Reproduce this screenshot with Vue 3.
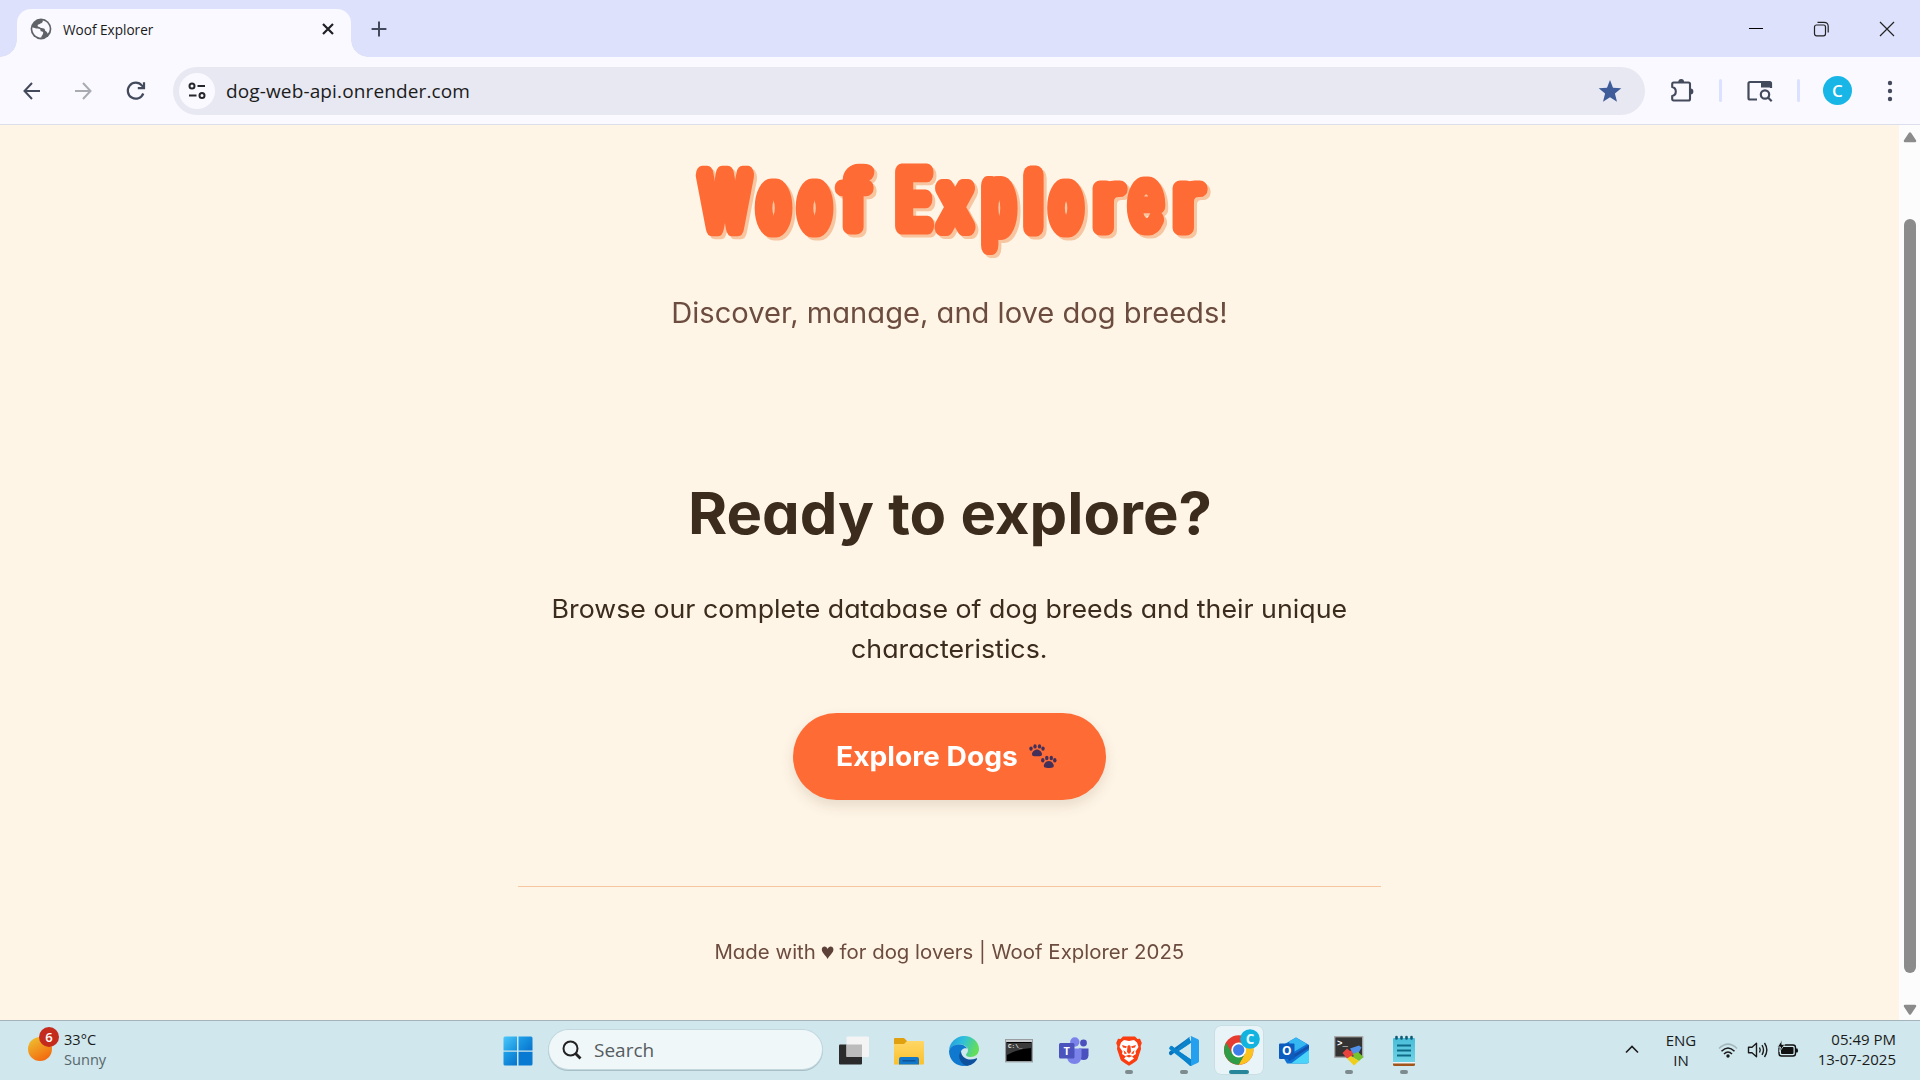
<script setup>
const apps = [
  { name: 'taskview' },
  { name: 'folder' },
  { name: 'edge' },
  { name: 'cmd' },
  { name: 'teams' },
  { name: 'brave', open: true },
  { name: 'vscode', open: true },
  { name: 'chrome', active: true },
  { name: 'outlook' },
  { name: 'putty', open: true },
  { name: 'notepad', open: true }
]

// Bubble title glyphs: centre x, baseline y, horizontal and vertical scale, stroke
const glyphs = [
  { c: 'W', x: 45, y: 91.5, sx: 0.68, sy: 1, w: 18.5 },
  { c: 'o', x: 93.5, y: 91.5, sx: 0.66, sy: 1, w: 19 },
  { c: 'o', x: 134.5, y: 91.5, sx: 0.66, sy: 1, w: 19 },
  { c: 'f ', x: 175, y: 92, sx: 1.05, sy: 1.04, w: 14.5 },
  { c: 'E', x: 233.5, y: 91, sx: 0.78, sy: 1.04, w: 16.5 },
  { c: 'x', x: 275, y: 91.5, sx: 0.75, sy: 1, w: 18 },
  { c: 'p', x: 318.5, y: 94, sx: 0.68, sy: 1.1, w: 18 },
  { c: 'l', x: 353.5, y: 91.5, sx: 0.8, sy: 1, w: 19 },
  { c: 'o', x: 386, y: 91.5, sx: 0.66, sy: 1, w: 19 },
  { c: 'r', x: 427.5, y: 92.5, sx: 1.08, sy: 1.03, w: 14.5 },
  { c: 'e', x: 466, y: 92, sx: 0.76, sy: 1.1, w: 13.5 },
  { c: 'r', x: 507.5, y: 92.5, sx: 1.08, sy: 1.03, w: 14.5 }
]
</script>

<template>
  <div class="screen">
    <header class="tabstrip">
      <div class="tab">
        <svg class="globe" width="22" height="22" viewBox="0 0 22 22"><circle cx="11" cy="11" r="10.4" fill="#5f6368" /><path d="M2.300 9.500C3.500 9 5 10.500 7.500 10.500C10 10.500 10.800 11.500 10.600 13.200C12.500 13 13.800 14 13 15.800C12.300 17.600 11.300 18 11.300 19.600C6 19.600 2 15.500 2.300 9.500Z M12.800 2.500C16.500 3.300 19.500 6.500 19.700 10.500C19.700 12.500 19 14.300 17.800 15.800C17.300 14.800 16.800 13.500 15.500 13C14.500 12.200 15.300 10.800 14 10.400C12.500 10 10.500 10.200 9.500 9C8.300 9 7 8.300 7.800 7C8.300 6 10 6.500 10.300 5.500C12 5.200 12.900 4.300 12.800 2.500Z" fill="#faf9ff" /></svg>
        <span class="tab-title">Woof Explorer</span>
        <svg class="tab-x" width="12" height="12" viewBox="0 0 12 12"><path d="M1 1L11 11M11 1L1 11" stroke="#1f2024" stroke-width="2.200" /></svg>
      </div>
      <svg class="plus" width="16" height="16" viewBox="0 0 16 16"><path d="M8 .6V15.400M.6 8H15.400" stroke="#434a5c" stroke-width="2" /></svg>
      <div class="win">
        <svg width="14" height="16" viewBox="0 0 14 16"><path d="M0 7.500H14" stroke="#000" stroke-width="1" /></svg>
        <svg width="16" height="16" viewBox="0 0 16 16" fill="none" stroke="#222" stroke-width="1.200"><rect x="1.500" y="4" width="11" height="10.800" rx="2" /><path d="M4.500 1.300H11Q15.200 1.300 15.200 5.500V11.500" /></svg>
        <svg width="16" height="16" viewBox="0 0 16 16"><path d="M1 1L15 15M15 1L1 15" stroke="#222" stroke-width="1.200" /></svg>
      </div>
    </header>

    <nav class="toolbar">
      <svg class="back" width="20" height="20" viewBox="0 0 20 20" fill="none" stroke="#434a5c" stroke-width="2"><path d="M10 2L2.500 10L10 18M2.500 10H18" /></svg>
      <svg class="fwd" width="20" height="20" viewBox="0 0 20 20" fill="none" stroke="#a9abb3" stroke-width="2"><path d="M10 2L17.500 10L10 18M17.500 10H2" /></svg>
      <svg class="reload" width="20" height="20" viewBox="0 0 20 20" fill="none" stroke="#434a5c" stroke-width="2.200"><path d="M17.300 12.500A8 8 0 1 1 16 4.600L17.600 6.500" /><path d="M18 1.200V7.200H11.800" /></svg>
      <div class="omnibox">
        <span class="site"><svg width="18" height="18" viewBox="0 0 18 18" fill="none" stroke="#25262b" stroke-width="2"><circle cx="4" cy="4" r="2.500" /><path d="M9.500 4H17M1 13.500H8.500" /><circle cx="14" cy="13.500" r="2.500" /></svg></span>
        <span class="url">dog-web-api.onrender.com</span>
        <svg class="star" width="24" height="22" viewBox="0 0 24 22"><path d="M12 0L15 7.800L23.300 8.300L16.900 13.600L19 21.800L12 17.200L5 21.800L7.100 13.600L.7 8.300L9 7.800Z" fill="#3f5c9a" /></svg>
      </div>
      <svg class="ext" width="24" height="24" viewBox="0 0 24 24"><path d="M3.600 3.500H18.500Q20 3.500 20 5V20Q20 21.500 18.500 21.500H3.600Q2.200 21.500 2.200 20V17C7 16 7 9 2.200 8V5Q2.200 3.500 3.600 3.500Z" fill="none" stroke="#434a5c" stroke-width="2.100" stroke-linejoin="round" /><path d="M8.300 3A2.900 2.900 0 0 1 14.100 3ZM20.500 9.600A2.900 2.900 0 0 1 20.500 15.400Z" fill="#434a5c" /></svg>
      <i class="sep"></i>
      <svg class="lens" width="26" height="22" viewBox="0 0 26 22" fill="none" stroke="#434a5c" stroke-width="2.200"><path d="M10 19.500H3Q1.500 19.500 1.500 18V3.500Q1.500 2 3 2H22.500Q24 2 24 3.500V8" /><path d="M14 1.500H23Q24.500 1.500 24.500 3V7.600H14Z" fill="#434a5c" stroke="none" /><circle cx="18" cy="14.500" r="4.200" /><path d="M21 17.500L24.700 21.200" /></svg>
      <i class="sep sep2"></i>
      <span class="avatar">C</span>
      <svg class="dots" width="6" height="22" viewBox="0 0 6 22" fill="#434a5c"><circle cx="3" cy="3" r="2.200" /><circle cx="3" cy="11" r="2.200" /><circle cx="3" cy="19" r="2.200" /></svg>
    </nav>

    <div class="viewport">
      <main class="page">
        <h1 class="title">
          <svg width="540" height="130" viewBox="0 0 540 130">
            <defs><filter id="fatten" x="0" y="0" width="540" height="130" filterUnits="userSpaceOnUse" color-interpolation-filters="sRGB"><feMorphology operator="dilate" radius="2 0" /></filter></defs>
            <g class="bubble" filter="url(#fatten)">
              <text v-for="(g, i) in glyphs" :key="i" :transform="`translate(${g.x} ${g.y}) scale(${g.sx} ${g.sy})`" :stroke-width="g.w" text-anchor="middle">{{ g.c }}</text>
            </g>
          </svg>
        </h1>
        <p class="sub">Discover, manage, and love dog breeds!</p>
        <section class="cta">
          <h2>Ready to explore?</h2>
          <p class="lead">Browse our complete database of dog breeds and their unique<br>characteristics.</p>
          <a class="btn"><span class="btn-text">Explore Dogs</span>
            <svg width="28" height="26" viewBox="0 0 28 26" fill="#43305a"><g id="paw"><path d="M8 5.500C10.500 5.500 13 8 13 10.200C13 12.500 10.500 12.300 8 12.300S3 12.500 3 10.200C3 8 5.500 5.500 8 5.500Z" /><ellipse cx="2" cy="4.600" rx="1.700" ry="2.200" /><ellipse cx="6" cy="2.400" rx="1.700" ry="2.200" /><ellipse cx="10.500" cy="2.400" rx="1.700" ry="2.200" /><ellipse cx="14" cy="4.600" rx="1.700" ry="2.200" /></g><use href="#paw" x="11.800" y="11.600" /></svg>
          </a>
        </section>
        <footer class="foot"><span>Made with <svg width="12" height="13" viewBox="0 0 12 13"><path d="M6 13C4.500 9.500 .3 7 .3 3.500C.3 -.3 5 -.6 6 3C7 -.6 11.700 -.3 11.700 3.500C11.700 7 7.500 9.500 6 13Z" fill="#5d4037" /></svg> for dog lovers | Woof Explorer 2025</span></footer>
      </main>
      <aside class="scroll">
        <svg width="14" height="11" viewBox="0 0 14 11"><path d="M7 1.500L12 9H2Z" fill="#8b8b8b" stroke="#8b8b8b" stroke-width="2.500" stroke-linejoin="round" /></svg>
        <i class="thumb"></i>
        <svg width="14" height="11" viewBox="0 0 14 11"><path d="M7 9.500L12 2H2Z" fill="#8b8b8b" stroke="#8b8b8b" stroke-width="2.500" stroke-linejoin="round" /></svg>
      </aside>
    </div>

    <footer class="taskbar">
      <div class="weather">
        <span class="sun"><b>6</b></span>
        <div class="wt"><span>33°C</span><span class="dim">Sunny</span></div>
      </div>
      <div class="start">
        <svg width="30" height="30" viewBox="0 0 30 30"><defs><linearGradient id="wg" x1="0" y1="0" x2="1" y2="1"><stop offset="0" stop-color="#4cc8fb" /><stop offset="1" stop-color="#1390dd" /></linearGradient><linearGradient id="wg2" x1="0" y1="0" x2="1" y2="1"><stop offset="0" stop-color="#1fa3ea" /><stop offset="1" stop-color="#0873cc" /></linearGradient></defs><path d="M2 .5H14V14.500H.5V2Q.5 .5 2 .5Z" fill="url(#wg)" /><path d="M15.500 .5H28Q29.500 .5 29.500 2V14.500H15.500Z" fill="url(#wg2)" /><path d="M.5 15.800H14V29.500H2Q.5 29.500 .5 28Z" fill="url(#wg2)" /><path d="M15.500 15.800H29.500V28Q29.500 29.500 28 29.500H15.500Z" fill="#087ad2" /></svg>
      </div>
      <div class="search">
        <svg width="20" height="20" viewBox="0 0 20 20" fill="none" stroke="#222"><circle cx="8.500" cy="8.500" r="7" stroke-width="2" /><path d="M13.500 13.500L18.500 18.500" stroke-width="2.800" /></svg>
        <span>Search</span>
      </div>
      <div class="apps">
        <div v-for="a in apps" :key="a.name" class="cell" :class="{ active: a.active, open: a.open }">
          <svg v-if="a.name === 'taskview'" width="30" height="30" viewBox="0 0 30 30"><rect x="0" y="8.500" width="23" height="20" rx="1" fill="#2b2b2b" /><rect x="7.500" y=".5" width="22.500" height="20.500" rx="1" fill="#f4f4f4" /><rect x="7.500" y="8.500" width="15.500" height="12.500" fill="#bcbcbc" /></svg>
          <svg v-else-if="a.name === 'folder'" width="30" height="30" viewBox="0 0 30 30"><defs><linearGradient id="fg" x1="0" y1="0" x2="0" y2="1"><stop offset="0" stop-color="#ffd766" /><stop offset="1" stop-color="#fbc02d" /></linearGradient></defs><path d="M0 3Q0 2 1 2H10L13 5V9H0Z" fill="#e0a010" /><path d="M0 8H10L13 5H29Q30 5 30 6V27Q30 28.500 29 28.500H0Z" fill="url(#fg)" /><path d="M5 28.500V23Q5 21 7 21H23Q25 21 25 23V28.500Z" fill="#1277c8" /><path d="M8.500 24.800H21.500" stroke="#0b4c8e" stroke-width="1.200" /></svg>
          <svg v-else-if="a.name === 'edge'" width="30" height="30" viewBox="0 0 30 30"><defs><linearGradient id="eg" x1="0" y1="0" x2="1" y2=".3"><stop offset="0" stop-color="#2196e0" /><stop offset=".5" stop-color="#2fc0dc" /><stop offset="1" stop-color="#63dd5b" /></linearGradient></defs><path d="M0 15C0 7 7 0 15 0C24 0 30 6.500 30 13C30 18 26 21 21.500 21C18 21 17 20 17 18.800C17 17.500 19 17 19 14.500C19 11 15.500 8.500 11 8.500C5 8.500 0 12 0 15Z" fill="url(#eg)" /><path d="M0 15C1 10.500 6 8.500 10.500 8.500C13.500 8.500 17 10 18 12.500C14 11.500 11.500 14.500 11.500 18C11.500 23 15 27.500 22 28C18 30.500 10 31 5 26.500Q0 22 0 15Z" fill="#0f79d0" /><path d="M12 15C8 20 11 27 17 29.800C22 29.500 26 27 28 23.200C28.300 22.500 27.700 22 27 22.400C20 25.500 12 22 12 15Z" fill="#0d519e" /></svg>
          <svg v-else-if="a.name === 'cmd'" width="28" height="24" viewBox="0 0 28 24"><rect x=".7" y=".7" width="26.600" height="22" fill="#000" stroke="#9a9ea0" stroke-width="1.400" /><path d="M1 1H27V3H1Z" fill="#c9cccf" /><path d="M2 4H26V9Q12 10 2 16Z" fill="#3b3b3b" /><text x="3" y="9" font-family="Liberation Mono" font-size="6" font-weight="700" fill="#eee">C:\_</text></svg>
          <svg v-else-if="a.name === 'teams'" width="30" height="28" viewBox="0 0 30 28"><circle cx="24.500" cy="6" r="3.400" fill="#4a50bd" /><path d="M20 11.500H29.500V18.500Q29 23 24.500 23Q20 23 20 18Z" fill="#4a50bd" /><circle cx="15.800" cy="5" r="4.700" fill="#7b83eb" /><path d="M8 11.500H22.500V19.500Q22 27 15.500 27Q8.500 27 8 19.500Z" fill="#7b83eb" /><rect x="0" y="6" width="15.500" height="15.500" rx="1.500" fill="#4b53bc" /><text x="7.750" y="17.500" text-anchor="middle" font-family="Open Sans" font-size="11" font-weight="700" fill="#fff">T</text></svg>
          <svg v-else-if="a.name === 'brave'" width="26" height="30" viewBox="0 0 26 30"><path d="M7 .5H19L21.500 3L24 2.800L25.800 7L24.700 10L25 13L21.500 23.500Q20.500 25.500 13 29.700Q5.500 25.500 4.500 23.500L1 13L1.300 10L.2 7L2 2.800L4.500 3Z" fill="#fb3d12" /><path d="M8 4L13 5L18 4L21 6.500L22.500 11L19.500 15.500L20 18L16 20.500L18 22.500L13 26L8 22.500L10 20.500L6 18L6.500 15.500L3.500 11L5 6.500Z" fill="#fff" /><path d="M6 9L11 10.500L10 12L7 11.500ZM20 9L15 10.500L16 12L19 11.500ZM11.500 10L11 16L13 18L15 16L14.500 10L13 9ZM7.500 14L11 17.500L8.500 18ZM18.500 14L15 17.500L17.500 18ZM9.500 20L13 18.700L16.500 20L13 21.500Z" fill="#fb4214" /></svg>
          <svg v-else-if="a.name === 'vscode'" width="30" height="30" viewBox="0 0 30 30"><path d="M22 0L7 15.500L2.500 19Q1.300 19.700 .4 18.500L0 17.500Q-.5 16.500 .8 15.300L22 0Z" fill="#0a75bd" /><path d="M22 30L.8 13.500Q-.5 12.500 .4 11.500L1.500 10Q2.500 9.500 3.500 10.500L22 23.500Z" fill="#0c8ad6" /><path d="M22.500 7L9.500 15.200L22.500 23.500V30Q20.500 30 19.500 28.500L1 12L3 10L8 14L20 1.300Z" fill="#0b83cc" /><path d="M11 15L22.500 6.500V23.500Z" fill="#cfe7ed" /><path d="M22 0L29 3.300Q30 4 30 5V25Q30 26 29 26.700L22 30Z" fill="#24a0ee" /></svg>
          <svg v-else-if="a.name === 'chrome'" class="chr" width="36" height="36" viewBox="0 0 36 36"><circle cx="14.700" cy="21" r="14.700" fill="#e53b30" /><path d="M14.700 13.700H27.500A14.700 14.700 0 0 1 14.700 35.700L21 24.600Z" fill="#fcc31e" /><path d="M14.700 35.700A14.700 14.700 0 0 1 2 13.650L8.300 24.600L21 24.600Z" fill="#2d9d48" /><circle cx="14.700" cy="21" r="7.400" fill="#fff" /><circle cx="14.700" cy="21" r="5.700" fill="#3d7eea" /><circle cx="26" cy="10" r="9.800" fill="#13b3e0" /><text x="26" y="15" text-anchor="middle" font-family="Open Sans" font-size="13.500" font-weight="700" fill="#e8f8fc">C</text></svg>
          <svg v-else-if="a.name === 'outlook'" width="30" height="28" viewBox="0 0 30 28"><path d="M4 8L17 .5L30 8V24Q30 26.500 27.500 26.500H8L4 20Z" fill="#0f73d4" /><path d="M10 4.500L17 .5L28 7L13 16Z" fill="#35b7f2" /><path d="M17 16L30 8V11L10 24L8 20Z" fill="#1350ac" /><path d="M12 26.500L30 13V24Q30 26.500 27.500 26.500Z" fill="#4ad4fa" /><rect x="0" y="6.500" width="15.500" height="15.500" rx="1" fill="#0c5cc0" /><text x="7.750" y="18.300" text-anchor="middle" font-family="Open Sans" font-size="12" font-weight="700" fill="#fff">O</text></svg>
          <svg v-else-if="a.name === 'putty'" width="30" height="30" viewBox="0 0 30 30"><rect x=".7" y=".7" width="28" height="20.500" fill="#333" stroke="#aaa" stroke-width="1.300" /><text x="3" y="10" font-family="Liberation Mono" font-size="9" font-weight="700" fill="#fff">&gt;_</text><path d="M8.500 17L13 12.500L16 15L18.500 14L20 18L17 21L13 22.500Z" fill="#e8443d" /><path d="M16 12.500L25 9.500L27.500 11.500L24 18L20 19Z" fill="#5190e8" /><path d="M19 18L24 16L29.500 21L25 25L20 22Z" fill="#76c42b" /><path d="M13 22.500L17 20L20 22L25 25L20 29.500Z" fill="#f0cf1c" /></svg>
          <svg v-else width="24" height="30" viewBox="0 0 24 30"><defs><linearGradient id="ng" x1="0" y1="0" x2="0" y2="1"><stop offset="0" stop-color="#48bdd8" /><stop offset="1" stop-color="#71d4e6" /></linearGradient></defs><rect x="1" y="2" width="22" height="25" rx="1" fill="url(#ng)" /><path d="M1 26H23V27.500H1Z" fill="#f2f2f2" /><path d="M1 27.500H23V28.500Q23 30 21.500 30H2.500Q1 30 1 28.500Z" fill="#a2541a" /><path d="M5 9.500H19M5 14.500H19M5 19.500H19" stroke="#0f6a87" stroke-width="1.800" /><path d="M4.500 1V2.500M9.500 1V2.500M14.500 1V2.500M19.500 1V2.500" stroke="#125a74" stroke-width="2.600" stroke-linecap="round" /></svg>
        </div>
      </div>
      <div class="tray">
        <svg class="chev" width="16" height="10" viewBox="0 0 16 10"><path d="M2 8.500L8 2.500L14 8.500" fill="none" stroke="#1b1b1b" stroke-width="1.600" /></svg>
        <div class="lang"><span>ENG</span><span>IN</span></div>
        <svg class="wifi" width="20" height="16" viewBox="0 0 20 16" fill="none" stroke="#1b1b1b" stroke-width="1.500"><path d="M1 5.500Q10 -3.200 19 5.500" stroke="#a3b8bd" /><path d="M3.500 8.300Q10 1.600 16.500 8.300M6 11Q10 6.800 14 11" /><circle cx="10" cy="13" r="1.700" fill="#1b1b1b" stroke="none" /></svg>
        <svg class="vol" width="22" height="18" viewBox="0 0 22 18" fill="none" stroke="#1b1b1b" stroke-width="1.400"><path d="M1.500 6.200H5L9.500 2.200V15.800L5 11.800H1.500Z" stroke-linejoin="round" /><path d="M12.500 6.500Q14 9 12.500 11.500M15 4.200Q18 9 15 13.800M17.500 2Q22.200 9 17.500 16" /></svg>
        <svg class="bat" width="22" height="18" viewBox="0 0 22 18"><rect x="2" y="5" width="16.500" height="11" rx="2.500" fill="none" stroke="#111" stroke-width="1.400" /><rect x="4" y="7" width="12.500" height="7" rx="1" fill="#111" /><path d="M19 8.500H20.500Q21.500 10.500 20.500 12.500H19Z" fill="#111" /><path d="M5 0L.5 7H3.500L2.500 11.500L7.800 4.500H4.800Z" fill="#111" stroke="#cfe7ed" stroke-width=".8" /></svg>
        <div class="clock"><span>05:49 PM</span><span>13-07-2025</span></div>
      </div>
    </footer>
  </div>
</template>

<style>
body { margin: 0; }
</style>

<style scoped>
* { box-sizing: border-box; }
svg { display: block; flex: none; overflow: visible; }
.screen { width: 1920px; height: 1080px; overflow: hidden; display: flex; flex-direction: column; font-family: "Open Sans", sans-serif; color: #1b1b1b; }
.tabstrip { height: 57px; flex: none; display: flex; background: #dde1fb; }
.tab { position: relative; width: 334px; height: 48px; margin: 9px 0 0 17px; border-radius: 14px 14px 0 0; background: #faf9ff; display: flex; align-items: center; padding: 0 17px 8px 12px; }
.tab::before, .tab::after { content: ""; position: absolute; bottom: 0; width: 17px; height: 17px; }
.tab::before { left: -17px; background: radial-gradient(circle at 0 0, transparent 16.500px, #faf9ff 17px); }
.tab::after { right: -17px; background: radial-gradient(circle at 100% 0, transparent 16.500px, #faf9ff 17px); }
.globe { margin-left: 1px; }
.tab-title { margin: 1px 0 0 11px; font-size: 13.600px; white-space: nowrap; }
.tab-x { margin-left: auto; }
.plus { margin: 21px 0 0 20px; }
.win { margin-left: auto; display: flex; gap: 50px; padding: 21px 25px 0 0; }
.toolbar { height: 68px; flex: none; background: #faf9ff; border-bottom: 1px solid #dcdeec; display: flex; align-items: center; padding: 0 27px 0 22px; }
.fwd { margin-left: 31px; }
.reload { margin-left: 33px; }
.omnibox { width: 1472px; height: 48px; border-radius: 24px; background: #e7e8f2; display: flex; align-items: center; padding: 0 23px 0 6px; margin-left: 27px; }
.site { width: 36px; height: 36px; border-radius: 50%; background: #faf9ff; display: flex; align-items: center; justify-content: center; }
.url { margin: 1px 0 0 11px; font-size: 19px; letter-spacing: .13px; white-space: nowrap; }
.star { margin-left: auto; }
.ext { margin-left: 25px; }
.sep { width: 3px; height: 23px; border-radius: 2px; background: #dae2ff; margin-left: 25px; }
.lens { margin-left: 25px; }
.sep2 { margin-left: 24px; }
.avatar { margin-left: 23px; width: 29px; height: 29px; border-radius: 50%; background: #17b6e6; color: #fff; font-size: 17px; font-weight: 600; display: flex; align-items: center; justify-content: center; }
.dots { margin-left: auto; }
.viewport { height: 895px; flex: none; display: flex; }
.page { width: 1899px; background: #fff5e6; display: flex; flex-direction: column; align-items: center; font-family: "Inter", sans-serif; font-feature-settings: "cv11"; color: #3b2c1e; text-align: center; white-space: nowrap; }
h1, h2, p { margin: 0; }
.title { width: 540px; height: 130px; margin-top: 10px; }
.title svg { filter: drop-shadow(3px 3px 0 #f7c59f); }
.bubble { font-family: "Inter", sans-serif; font-weight: 100; font-size: 71px; fill: #ff6b35; stroke: #ff6b35; stroke-linejoin: round; stroke-linecap: round; }
.sub { margin-top: 26px; font-size: 28px; line-height: 44px; transform: scaleX(1.04); color: #6b4c3f; }
.cta { width: 863px; display: flex; flex-direction: column; align-items: center; margin-top: 145px; }
h2 { font-size: 57.500px; line-height: 67px; font-weight: 700; transform: scaleX(1.04); }
.lead { margin-top: 42px; font-size: 25.600px; line-height: 40px; transform: scaleX(1.046); }
.btn { margin-top: 44px; width: 313px; height: 87px; border-radius: 44px; background: #ff6b35; color: #fff; font-size: 27px; font-weight: 700; display: flex; align-items: center; padding-left: 43px; gap: 19px; box-shadow: 0 6px 14px rgba(60, 40, 10, .12); }
.btn-text { transform: scaleX(1.045); transform-origin: left; margin-top: -1px; }
.foot { width: 863px; margin-top: 86px; border-top: 1px solid #f7c59f; padding-top: 49px; font-size: 20px; line-height: 32px; color: #6b4c3f; }
.foot span { display: inline-block; transform: scaleX(1.02); }
.foot svg { display: inline-block; }
.scroll { width: 21px; background: #fcfcfc; display: flex; flex-direction: column; align-items: center; padding: 7px 0 5px 1px; }
.thumb { width: 12px; height: 754px; border-radius: 6px; background: #8b8b8b; margin: 76px 0 auto; }
.taskbar { height: 60px; flex: none; background: #cfe7ed; border-top: 1px solid #a5b4ba; display: flex; font-size: 15px; line-height: 20px; }
.weather { width: 490px; display: flex; padding: 8px 0 0 28px; }
.sun { position: relative; width: 24px; height: 24px; margin-top: 8px; border-radius: 50%; background: linear-gradient(150deg, #eebc2e 10%, #f36b10 85%); }
.sun b { position: absolute; left: 11px; top: -10px; width: 20px; height: 20px; border-radius: 50%; background: #c42b1c; color: #fff; font-size: 13px; font-weight: 600; line-height: 20px; text-align: center; }
.wt { display: flex; flex-direction: column; margin-left: 12px; font-size: 14.600px; }
.dim { color: #57666b; }
.start { width: 55px; display: flex; align-items: center; justify-content: center; }
.search { margin: 9px 4px 0 4px; width: 273px; height: 39px; border-radius: 20px; background: #eff7f9; box-shadow: 0 0 0 1px #c2d8de, 0 1px 0 1px #a9bfc6; display: flex; align-items: center; padding-left: 13px; font-size: 19px; color: #565c5e; gap: 12px; }
.apps { display: flex; }
.cell { position: relative; width: 55px; height: 59px; display: flex; align-items: center; justify-content: center; }
.cell.open::after, .cell.active::after { content: ""; position: absolute; left: 23.500px; bottom: 6px; width: 8px; height: 4px; border-radius: 2px; background: #7d8b8f; }
.cell.active::before { content: ""; position: absolute; left: 3.500px; top: 5px; width: 48px; height: 48px; border-radius: 6px; background: #e8f4f7; box-shadow: 0 0 0 .5px #c3d7dc; }
.cell.active::after { left: 17.500px; width: 20px; background: #28869a; }
.cell svg { position: relative; }
.cell .chr { margin: 0 0 7px 6px; }
.tray { margin-left: auto; display: flex; align-items: flex-start; padding-right: 24px; }
.chev { margin-top: 23px; }
.lang { margin: 9px 0 0 25px; width: 32px; display: flex; flex-direction: column; align-items: center; }
.wifi { margin: 22px 0 0 21px; }
.vol { margin: 20px 0 0 9px; }
.bat { margin: 19px 0 0 8px; }
.clock { width: 97px; display: flex; flex-direction: column; align-items: flex-end; margin-top: 8px; }
</style>
